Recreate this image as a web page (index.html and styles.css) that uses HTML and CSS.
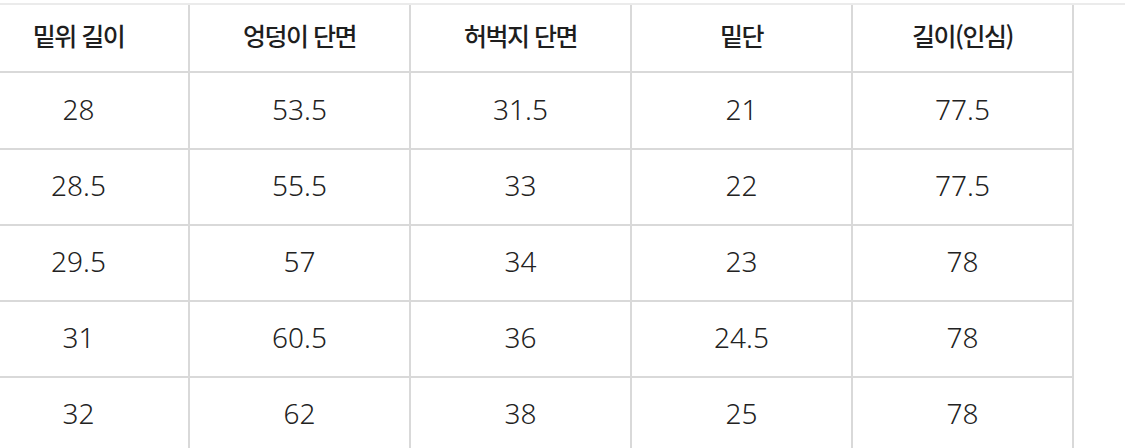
FILE: index.html
```html
<!DOCTYPE html>
<html lang="ko">
<head>
<meta charset="utf-8">
<link rel="stylesheet" href="styles.css">
</head>
<body>
<div class="wrap">
  <table class="size-table">
    <colgroup>
      <col class="c"><col class="c"><col class="c"><col class="c"><col class="c">
    </colgroup>
    <thead>
      <tr><th>밑위 길이</th><th>엉덩이 단면</th><th>허벅지 단면</th><th>밑단</th><th>길이(인심)</th></tr>
    </thead>
    <tbody>
      <tr class="first"><td>28</td><td>53.5</td><td>31.5</td><td>21</td><td>77.5</td></tr>
      <tr><td>28.5</td><td>55.5</td><td>33</td><td>22</td><td>77.5</td></tr>
      <tr><td>29.5</td><td>57</td><td>34</td><td>23</td><td>78</td></tr>
      <tr><td>31</td><td>60.5</td><td>36</td><td>24.5</td><td>78</td></tr>
      <tr><td>32</td><td>62</td><td>38</td><td>25</td><td>78</td></tr>
    </tbody>
  </table>
</div>
</body>
</html>
```
FILE: styles.css
```css
html, body {
  margin: 0;
  padding: 0;
  background: #ffffff;
}
body {
  width: 1125px;
  height: 448px;
  overflow: hidden;
}
.wrap {
  margin-top: 3px;
  border-top: 2px solid #ebebeb;
  overflow: hidden;
}
.size-table {
  border-collapse: collapse;
  table-layout: fixed;
  width: 1105px;
  margin-left: -33px;
  margin-top: -2px;
  font-family: "Noto Sans", "Noto Sans CJK KR", sans-serif;
  color: #1e1e1e;
}
.size-table .c {
  width: 221px;
}
.size-table th,
.size-table td {
  border: 2px solid #d9d9d9;
  text-align: center;
  padding: 0;
}
.size-table thead th {
  border-top: 2px solid #ebebeb;
}
.size-table th {
  height: 68px;
  font-family: "Noto Sans CJK KR", sans-serif;
  font-weight: 500;
  font-size: 25px;
  letter-spacing: -1.5px;
  vertical-align: top;
  padding-top: 12px;
  box-sizing: border-box;
}
.size-table td {
  height: 70px;
  padding-bottom: 4px;
  font-size: 28px;
  font-weight: 300;
  color: #222;
  vertical-align: middle;
}
.size-table .first td {
  height: 71px;
}
```
